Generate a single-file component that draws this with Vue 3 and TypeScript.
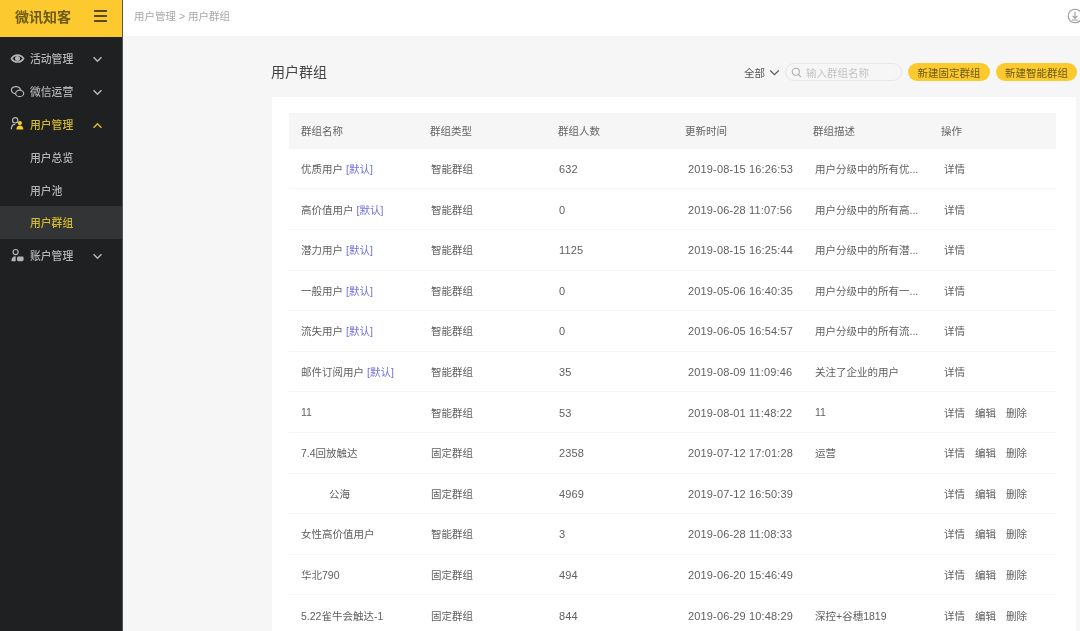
<script setup lang="ts">
interface Row {
  name: string
  isDefault?: boolean
  indent?: boolean
  type: string
  count: string
  time: string
  desc: string
  editable?: boolean
}

const smart = '智能群组'
const fixed = '固定群组'

const rows: Row[] = [
  { name: '优质用户', isDefault: true, type: smart, count: '632', time: '2019-08-15 16:26:53', desc: '用户分级中的所有优...' },
  { name: '高价值用户', isDefault: true, type: smart, count: '0', time: '2019-06-28 11:07:56', desc: '用户分级中的所有高...' },
  { name: '潜力用户', isDefault: true, type: smart, count: '1125', time: '2019-08-15 16:25:44', desc: '用户分级中的所有潜...' },
  { name: '一般用户', isDefault: true, type: smart, count: '0', time: '2019-05-06 16:40:35', desc: '用户分级中的所有一...' },
  { name: '流失用户', isDefault: true, type: smart, count: '0', time: '2019-06-05 16:54:57', desc: '用户分级中的所有流...' },
  { name: '邮件订阅用户', isDefault: true, type: smart, count: '35', time: '2019-08-09 11:09:46', desc: '关注了企业的用户' },
  { name: '11', type: smart, count: '53', time: '2019-08-01 11:48:22', desc: '11', editable: true },
  { name: '7.4回放触达', type: fixed, count: '2358', time: '2019-07-12 17:01:28', desc: '运营', editable: true },
  { name: '公海', indent: true, type: fixed, count: '4969', time: '2019-07-12 16:50:39', desc: '', editable: true },
  { name: '女性高价值用户', type: smart, count: '3', time: '2019-06-28 11:08:33', desc: '', editable: true },
  { name: '华北790', type: fixed, count: '494', time: '2019-06-20 15:46:49', desc: '', editable: true },
  { name: '5.22雀牛会触达-1', type: fixed, count: '844', time: '2019-06-29 10:48:29', desc: '深控+谷穗1819', editable: true }
]

const headers = ['群组名称', '群组类型', '群组人数', '更新时间', '群组描述', '操作']
</script>

<template>
  <div class="app">
    <aside class="sidebar">
      <div class="brand">
        <span class="brand-name">微讯知客</span>
        <span class="burger"><i></i><i></i><i></i></span>
      </div>
      <nav class="menu">
        <div class="item">
          <svg class="ico" viewBox="0 0 16 16" fill="none" stroke="currentColor" stroke-width="1.8">
            <path d="M1.500 8c1.600-2.600 3.800-3.700 6.500-3.700s4.900 1.100 6.500 3.700c-1.600 2.600-3.800 3.700-6.500 3.700S3.100 10.600 1.500 8z" />
            <circle cx="8" cy="8" r="1.800" fill="currentColor" />
          </svg>
          <span class="label">活动管理</span>
          <svg class="chev" viewBox="0 0 12 8" fill="none" stroke="currentColor" stroke-width="1.800"><path d="M1.500 1.500 6 6l4.500-4.500" /></svg>
        </div>
        <div class="item">
          <svg class="ico" viewBox="0 0 16 16" fill="none" stroke="currentColor" stroke-width="1.300">
            <ellipse cx="6.300" cy="6.500" rx="4.800" ry="3.800" />
            <ellipse cx="10.300" cy="10" rx="4.300" ry="3.400" fill="#1f2021" />
          </svg>
          <span class="label">微信运营</span>
          <svg class="chev" viewBox="0 0 12 8" fill="none" stroke="currentColor" stroke-width="1.800"><path d="M1.500 1.500 6 6l4.500-4.500" /></svg>
        </div>
        <div class="item active">
          <svg class="ico" viewBox="0 0 16 16">
            <circle cx="5.500" cy="4.500" r="2.800" fill="none" stroke="#b5b5b5" stroke-width="1.300" />
            <path d="M1.500 14c0-3.200 1.500-5 4-5" fill="none" stroke="#b5b5b5" stroke-width="1.300" />
            <circle cx="10.500" cy="7.500" r="2.300" fill="#f2cb2e" />
            <path d="M6.800 14.500c0-2.800 1.500-4.400 3.700-4.400s3.700 1.600 3.700 4.400z" fill="#f2cb2e" />
          </svg>
          <span class="label">用户管理</span>
          <svg class="chev" viewBox="0 0 12 8" fill="none" stroke="currentColor" stroke-width="1.800"><path d="M1.500 6.500 6 2l4.500 4.500" /></svg>
        </div>
        <div class="item sub"><span class="label">用户总览</span></div>
        <div class="item sub"><span class="label">用户池</span></div>
        <div class="item sub current"><span class="label">用户群组</span></div>
        <div class="item">
          <svg class="ico" viewBox="0 0 16 16" fill="currentColor">
            <circle cx="6" cy="4.300" r="2.700" fill="none" stroke="currentColor" stroke-width="1.300" />
            <path d="M1.500 14c0-3.400 1.800-5.300 4.500-5.300V14z" />
            <rect x="7.500" y="9" width="7" height="5" rx="1.500" />
          </svg>
          <span class="label">账户管理</span>
          <svg class="chev" viewBox="0 0 12 8" fill="none" stroke="currentColor" stroke-width="1.800"><path d="M1.500 1.500 6 6l4.500-4.500" /></svg>
        </div>
      </nav>
    </aside>

    <main class="main">
      <header class="topbar">
        <span class="crumb">用户管理 &gt; 用户群组</span>
        <svg class="download" viewBox="0 0 16 16" fill="none" stroke="#9a9a9a" stroke-width="1.100">
          <circle cx="8" cy="8" r="6.800" />
          <path d="M8 3.800v6M5.600 7.800 8 10.200l2.400-2.400M4.800 12h6.400" />
        </svg>
      </header>

      <section class="content">
        <div class="title-row">
          <h1 class="title">用户群组</h1>
          <div class="tools">
            <span class="filter">全部
              <svg class="filter-chev" viewBox="0 0 12 8" fill="none" stroke="#555" stroke-width="1.400"><path d="M1 1.500 6 6.500l5-5" /></svg>
            </span>
            <div class="search">
              <svg class="search-ico" viewBox="0 0 12 12" fill="none" stroke="#aaa" stroke-width="1.100">
                <circle cx="5.200" cy="5.200" r="3.900" /><path d="m8 8 3 3" />
              </svg>
              <span class="placeholder">输入群组名称</span>
            </div>
            <button class="btn first">新建固定群组</button>
            <button class="btn">新建智能群组</button>
          </div>
        </div>

        <div class="card">
          <div class="grid head">
            <span v-for="h in headers" :key="h">{{ h }}</span>
          </div>
          <div v-for="r in rows" :key="r.name + r.time" class="grid row">
            <span class="c-name" :class="{ indent: r.indent }">{{ r.name }}<em v-if="r.isDefault" class="def">[默认]</em></span>
            <span class="c-type">{{ r.type }}</span>
            <span class="c-count num">{{ r.count }}</span>
            <span class="c-time num">{{ r.time }}</span>
            <span class="c-desc">{{ r.desc }}</span>
            <span class="c-ops">
              <a>详情</a>
              <template v-if="r.editable"><a>编辑</a><a>删除</a></template>
            </span>
          </div>
        </div>
      </section>
    </main>
  </div>
</template>

<style>
html, body { margin: 0; background: #f6f6f6; overflow: hidden; }
</style>

<style scoped>
.app {
  display: flex;
  width: 1080px;
  height: 631px;
  overflow: hidden;
  background: #f6f6f6;
  font-family: "Liberation Sans", "Noto Sans CJK SC", sans-serif;
  filter: blur(0.6px);
}
.sidebar {
  width: 123px;
  flex: none;
  background: #1f2021;
  border-right: 1px solid #55565a;
  box-sizing: border-box;
}
.brand {
  height: 37px;
  box-sizing: border-box;
  background: #fcca2e;
  display: flex;
  align-items: center;
  justify-content: space-between;
  padding: 0 15px 5px 15px;
}
.brand-name { font-size: 14px; color: #6b5a14; font-weight: 700; }
.burger { display: flex; flex-direction: column; gap: 2.500px; width: 13px; }
.burger i { display: block; height: 2.500px; background: #5a4a10; }
.menu { padding-top: 5px; }
.item {
  height: 32.800px;
  display: flex;
  align-items: center;
  color: #b4b4b4;
  font-size: 10.800px;
  font-weight: 500;
  padding-left: 10px;
}
.ico { width: 15px; height: 15px; flex: none; margin-right: 5px; }
.label { flex: 1; }
.chev { width: 11px; height: 7px; margin: 3px 19px 0 0; flex: none; }
.active { color: #d4b92a; }
.sub { padding-left: 30px; color: #b4b4b4; }
.current { background: #333436; color: #d4b92a; }

.main { flex: 1; min-width: 0; display: flex; flex-direction: column; }
.topbar {
  height: 36px;
  flex: none;
  box-sizing: border-box;
  background: #fff;
  display: flex;
  align-items: center;
  justify-content: space-between;
  padding: 0 0 5px 11px;
  margin-right: -3px;
}
.crumb { font-size: 10.500px; color: #a8a8a8; }
.download { width: 16px; height: 16px; }

.content { padding: 0 4px 0 148px; }
.title-row {
  height: 61px;
  display: flex;
  align-items: center;
  justify-content: space-between;
  padding-top: 11px;
  box-sizing: border-box;
  margin-right: -1px;
}
.title { margin: 0 0 2px; font-size: 14px; font-weight: 400; color: #444; }
.tools { display: flex; align-items: center; }
.filter { display: flex; align-items: center; font-size: 10.500px; color: #555; }
.filter-chev { width: 11px; height: 7px; margin-left: 4px; }
.search {
  width: 117px;
  height: 18px;
  box-sizing: border-box;
  margin-left: 5px;
  border: 1px solid #e6e6e6;
  border-radius: 9px;
  display: flex;
  align-items: center;
  padding-left: 5px;
}
.search-ico { width: 11px; height: 11px; margin-right: 4px; }
.placeholder { font-size: 10.500px; color: #c4c4c4; }
.btn {
  width: 81px;
  height: 18px;
  border: 0;
  padding: 0;
  margin-left: 6px;
  border-radius: 9px;
  background: #fcca2e;
  color: #6b5a14;
  font-family: inherit;
  font-size: 10.500px;
}
.btn.first { width: 82px; }

.card {
  margin-left: 1px;
  background: #fff;
  padding: 16px 20px 0 17px;
  border-radius: 2px;
  height: 600px;
}
.grid {
  display: grid;
  grid-template-columns: 129px 128px 127px 128px 128px 1fr;
  align-items: center;
  padding-left: 12px;
  font-size: 10.500px;
  color: #5f5f5f;
}
.head { height: 35.800px; background: #f6f6f6; color: #666; }
.row { height: 40.600px; border-bottom: 1px solid #f6f6f6; box-sizing: border-box; white-space: nowrap; }
.c-type { padding-left: 1px; }
.c-count { padding-left: 1px; }
.c-time { padding-left: 3px; }
.c-desc { padding-left: 2px; }
.c-ops { padding-left: 3px; display: flex; gap: 10px; }
.num { font-size: 11px; letter-spacing: 0.150px; padding-top: 1px; }
.indent { padding-left: 28px; }
.def { font-style: normal; color: #6e6ee0; margin-left: 3px; }
</style>
